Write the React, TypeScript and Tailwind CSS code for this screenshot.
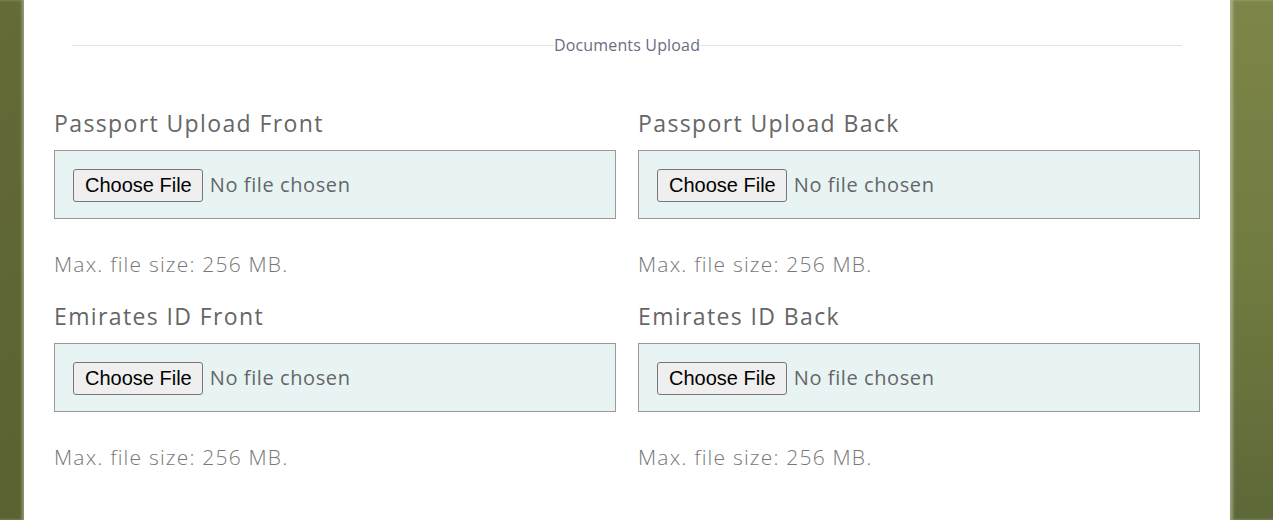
const fields = [
  { label: "Passport Upload Front", name: "passport_front" },
  { label: "Passport Upload Back", name: "passport_back" },
  { label: "Emirates ID Front", name: "eid_front" },
  { label: "Emirates ID Back", name: "eid_back" },
];

function UploadField({ label, name }: { label: string; name: string }) {
  return (
    <div className="mb-[21px] flex flex-col">
      <label htmlFor={name} className="h-[33px] text-[23px] leading-[33px] tracking-[0.06em] text-[#666]">
        {label}
      </label>
      <input
        id={name}
        name={name}
        type="file"
        className="mt-[10px] h-[69px] w-full border border-[#999] bg-[#e8f4f4] px-[18px] py-[17px] text-[20px] leading-[33px] tracking-[0.03em] text-[#666] file:mr-[7px] file:h-[33px] file:rounded-[3px] file:border file:border-[#767676] file:bg-[#efefef] file:pl-[11px] file:pr-[10px] file:font-['Liberation_Sans',Arial,sans-serif] file:text-[20px] file:leading-[31px] file:tracking-normal file:text-black"
      />
      <p className="mt-[30px] text-[21px] font-light leading-[30px] tracking-[0.057em] text-[#777]">
        Max. file size: 256 MB.
      </p>
    </div>
  );
}

export default function App() {
  return (
    <div className="flex h-[520px] w-full overflow-hidden font-['Open_Sans',sans-serif]">
      <div className="w-[24px] bg-gradient-to-b from-[#646b37] to-[#5a6231] shadow-[inset_-2px_0_3px_rgba(255,255,255,0.35)]" />
      <main className="flex-1 bg-white px-[30px]">
        <div className="mx-[18px] flex items-center pt-[35px]">
          <div className="h-px flex-1 bg-[#e2e2e2]" />
          <span className="text-[16px] leading-[20px] tracking-[0.01em] text-[#6c6c80]">Documents Upload</span>
          <div className="h-px flex-1 bg-[#e2e2e2]" />
        </div>
        <div className="mt-[52px] grid grid-cols-2 gap-x-[22px]">
          {fields.map((f) => (
            <UploadField key={f.name} {...f} />
          ))}
        </div>
      </main>
      <div className="w-[43px] bg-gradient-to-b from-[#7e8548] via-[#717c41] to-[#5d6838] shadow-[inset_3px_0_3px_rgba(255,255,255,0.35)]" />
    </div>
  );
}
